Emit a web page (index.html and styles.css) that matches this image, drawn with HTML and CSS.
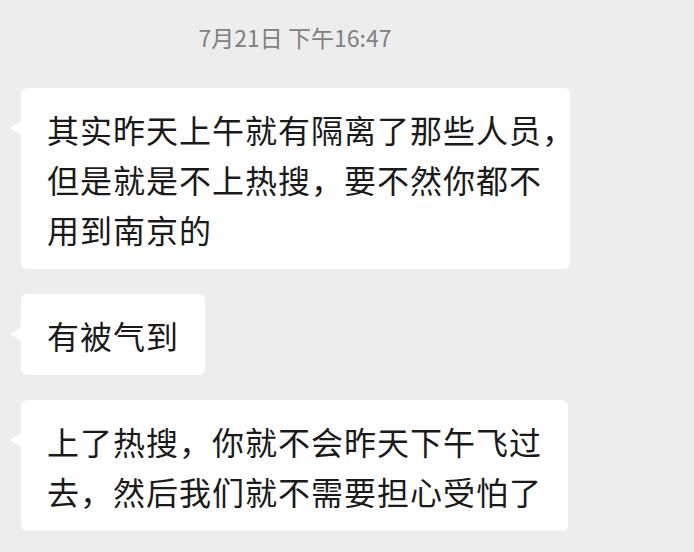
FILE: index.html
```html
<!DOCTYPE html>
<html lang="zh-CN">
<head>
  <meta charset="UTF-8" />
  <meta name="viewport" content="width=device-width, initial-scale=1.0"/>
  <title>聊天记录</title>
  <link rel="stylesheet" href="styles.css">
</head>
<body>

<div class="chat">
  <div class="time">7月21日 下午16:47</div>

  <div class="messages">
    <div class="bubble">
      <p>其实昨天上午就有隔离了那些人员，<br>但是就是不上热搜，要不然你都不<br>用到南京的</p>
    </div>
    <div class="bubble">
      <p>有被气到</p>
    </div>
    <div class="bubble">
      <p>上了热搜，你就不会昨天下午飞过<br>去，然后我们就不需要担心受怕了</p>
    </div>
  </div>
</div>

</body>
</html>
```

FILE: styles.css
```css
body {
  margin: 0;
  height: 100vh;
  overflow: hidden;
  background: #ededed;
  font-family: 'Noto Sans CJK SC', 'Noto Sans', sans-serif;
}

.chat {
  padding-top: 22px;
}

.time {
  width: 590px;
  text-align: center;
  font-size: 23px;
  line-height: 30px;
  color: #808080;
  margin-bottom: 36px;
}

.messages {
  display: flex;
  flex-direction: column;
  align-items: flex-start;
  gap: 25px;
  padding-left: 21px;
}

.bubble {
  position: relative;
  max-width: 549px;
  box-sizing: border-box;
  background: #fff;
  border-radius: 6px;
  padding: 16px 26px 15px;
}

/* little tail pointing at the avatar side */
.bubble::before {
  content: '';
  position: absolute;
  left: -11px;
  top: 33px;
  border-top: 7px solid transparent;
  border-bottom: 7px solid transparent;
  border-right: 11px solid #fff;
}

.bubble p {
  margin: 0;
  font-size: 32px;
  line-height: 50px;
  letter-spacing: 1px;
  color: #1a1a1a;
  white-space: nowrap;
}
```
